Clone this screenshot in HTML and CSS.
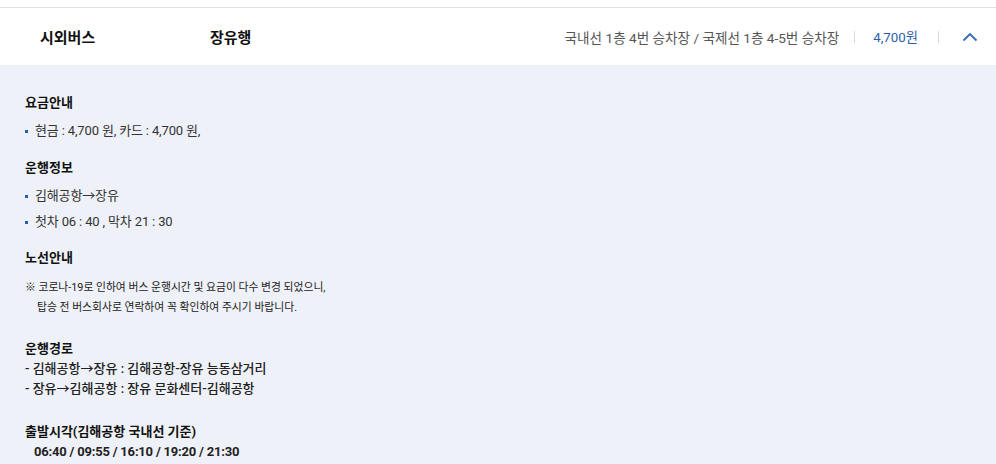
FILE: index.html
```html
<!DOCTYPE html>
<html lang="ko">
<head>
  <meta charset="UTF-8" />
  <meta name="viewport" content="width=device-width, initial-scale=1.0"/>
  <title>시외버스 - 장유행</title>
  <link rel="stylesheet" href="styles.css">
</head>
<body>

  <div class="route-item">
    <!-- Header row -->
    <div class="route-head">
      <span class="route-type">시외버스</span>
      <span class="route-name">장유행</span>
      <div class="route-meta">
        <span class="route-stop">국내선 1층 4번 승차장 / 국제선 1층 4-5번 승차장</span>
        <span class="divider"></span>
        <span class="route-price">4,700원</span>
        <span class="divider"></span>
        <button class="toggle" aria-label="접기">
          <svg width="16" height="10" viewBox="0 0 16 10">
            <path d="M1.5 8.5 L8 2 L14.5 8.5" fill="none" stroke="#2f6cb3" stroke-width="1.8"/>
          </svg>
        </button>
      </div>
    </div>

    <!-- Detail -->
    <div class="route-body">
      <div class="section sec-fare">
        <h3>요금안내</h3>
        <ul class="dot-list">
          <li>현금 : 4,700 원, 카드 : 4,700 원,</li>
        </ul>
      </div>

      <div class="section sec-info">
        <h3>운행정보</h3>
        <ul class="dot-list">
          <li>김해공항→장유</li>
          <li>첫차 06 : 40 , 막차 21 : 30</li>
        </ul>
      </div>

      <div class="section sec-notice">
        <h3>노선안내</h3>
        <p class="notice">※ 코로나-19로 인하여 버스 운행시간 및 요금이 다수 변경 되었으니,<br>
          <span class="indent">탑승 전 버스회사로 연락하여 꼭 확인하여 주시기 바랍니다.</span></p>
      </div>

      <div class="section sec-path">
        <h3>운행경로</h3>
        <p class="path">- 김해공항→장유 : 김해공항-장유 능동삼거리</p>
        <p class="path">- 장유→김해공항 : 장유 문화센터-김해공항</p>
      </div>

      <div class="section sec-time">
        <h3>출발시각(김해공항 국내선 기준)</h3>
        <p class="times">06:40 / 09:55 / 16:10 / 19:20 / 21:30</p>
      </div>
    </div>
  </div>

</body>
</html>
```

FILE: styles.css
```css
body {
  margin: 0;
  font-family: Roboto, "Noto Sans CJK KR", sans-serif;
  background: #ffffff;
  color: #222;
}

.route-item {
  margin-top: 7px;
  border-top: 1px solid #e1e1e1;
}

.route-head {
  display: flex;
  align-items: center;
  height: 57px;
  padding: 0 18px 0 40px;
  background: #fff;
}

.route-type, .route-name {
  font-size: 15px;
  font-weight: 700;
  color: #111;
}

.route-type {
  width: 170px;
}

.route-meta {
  margin-left: auto;
  display: flex;
  align-items: center;
}

.route-stop {
  font-size: 13.6px;
  color: #555;
}

.divider {
  width: 1px;
  height: 12px;
  background: #d9d9d9;
  margin: 0 18px 0 15px;
}

.route-price {
  font-size: 13.3px;
  color: #2a5ea8;
}

.route-price + .divider {
  margin: 0 23px 0 20px;
}

.toggle {
  border: none;
  background: none;
  padding: 0;
  width: 16px;
  height: 16px;
  display: flex;
  align-items: center;
  justify-content: center;
  cursor: pointer;
}

.route-body {
  background: #eef1f7;
  padding: 28px 25px 3px;
}

.section h3 {
  margin: 0;
  font-size: 13px;
  font-weight: 700;
  line-height: 20px;
  color: #111;
}

.dot-list {
  list-style: none;
  margin: 8px 0 0;
  padding: 0;
}

.dot-list li {
  position: relative;
  padding-left: 10px;
  font-size: 13px;
  line-height: 20px;
  letter-spacing: -0.15px;
  color: #333;
  margin-bottom: 6px;
}

.dot-list li::before {
  content: "";
  position: absolute;
  left: 0;
  top: 9px;
  width: 3px;
  height: 3px;
  background: #2a5ea8;
}

.dot-list li:last-child {
  margin-bottom: 0;
}

.sec-fare {
  margin-bottom: 17px;
}

.sec-info {
  margin-bottom: 16px;
}

.notice {
  margin: 10px 0 0;
  font-size: 10.8px;
  line-height: 20px;
  color: #222;
}

.notice .indent {
  padding-left: 12px;
}

.sec-notice {
  margin-bottom: 21px;
}

.path {
  margin: 0;
  font-size: 13px;
  font-weight: 500;
  line-height: 20px;
  color: #222;
}

.sec-path {
  margin-bottom: 23px;
}

.times {
  margin: 0;
  padding-left: 9px;
  font-size: 13px;
  font-weight: 700;
  line-height: 20px;
  letter-spacing: -0.2px;
  color: #222;
}
```
